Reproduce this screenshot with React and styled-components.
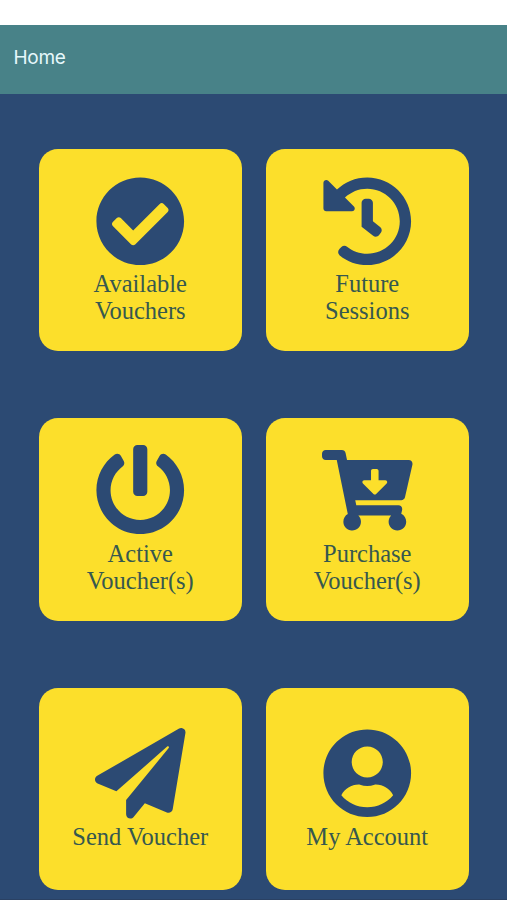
import React from "react";
import styled, { createGlobalStyle } from "styled-components";
import {
  FaCheckCircle,
  FaHistory,
  FaPowerOff,
  FaCartArrowDown,
  FaPaperPlane,
  FaUserCircle,
} from "react-icons/fa";

const GlobalStyle = createGlobalStyle`
  * {
    box-sizing: border-box;
  }

  body {
    margin: 0;
    background: #ffffff;
    overflow: hidden;
  }
`;

const Page = styled.div`
  display: flex;
  flex-direction: column;
  height: 900px;
  padding-top: 25px;
  overflow: hidden;
`;

const Header = styled.header`
  display: flex;
  flex: none;
  align-items: center;
  height: 69px;
  padding: 0 13.5px 5px;
  background: #488288;
`;

const HeaderTitle = styled.span`
  font-family: Inter, "Liberation Sans", sans-serif;
  font-size: 19px;
  letter-spacing: -0.3px;
  color: #e6f8fc;
`;

const Menu = styled.main`
  display: grid;
  flex: 1;
  grid-template-columns: repeat(2, 202.5px);
  grid-auto-rows: 202.5px;
  gap: 67px 24.5px;
  padding: 54.8px 39px 0;
  background: #2c4a73;
  border-bottom: 1px solid #2a4163;
`;

const Card = styled.button`
  display: flex;
  flex-direction: column;
  align-items: center;
  justify-content: center;
  padding: 0;
  border: none;
  border-radius: 19px;
  background: #fcdf2b;
  color: #2c4a73;
  cursor: pointer;

  svg {
    flex: none;
    margin-bottom: 4.3px;
  }
`;

const Label = styled.span`
  max-width: ${(props) => props.$width || "150px"};
  font-family: "Liberation Serif", "Times New Roman", serif;
  font-size: 24.5px;
  line-height: 27px;
  text-align: center;
  color: #36584f;
`;

const items = [
  { name: "Available Vouchers", icon: FaCheckCircle },
  { name: "Future Sessions", icon: FaHistory, width: "110px" },
  { name: "Active Voucher(s)", icon: FaPowerOff },
  { name: "Purchase Voucher(s)", icon: FaCartArrowDown },
  { name: "Send Voucher", icon: FaPaperPlane },
  { name: "My Account", icon: FaUserCircle },
];

export default function App() {
  return (
    <Page>
      <GlobalStyle />
      <Header>
        <HeaderTitle>Home</HeaderTitle>
      </Header>
      <Menu>
        {items.map(({ name, icon: Icon, width }) => (
          <Card key={name}>
            <Icon size={90.5} />
            <Label $width={width}>{name}</Label>
          </Card>
        ))}
      </Menu>
    </Page>
  );
}
